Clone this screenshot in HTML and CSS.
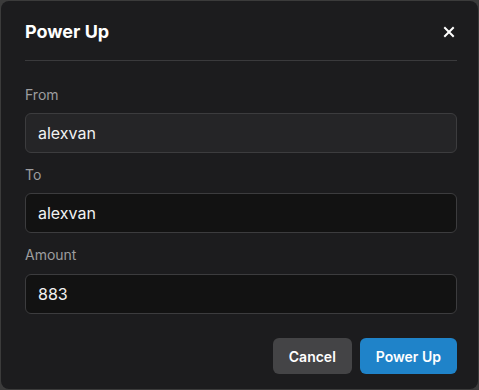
FILE: index.html
```html
<!DOCTYPE html>
<html lang="en">
<head>
    <meta charset="UTF-8">
    <meta name="viewport" content="width=device-width, initial-scale=1.0">
    <title>Power Up</title>
    <link rel="stylesheet" href="styles.css">
</head>
<body>
    <div class="modal">
        <header class="modal-header">
            <h2>Power Up</h2>
            <button type="button" class="close-button" aria-label="Close">
                <svg width="12" height="12" viewBox="0 0 12 12">
                    <path d="M2 2 L10 10 M10 2 L2 10" stroke="#fff" stroke-width="2" stroke-linecap="square"/>
                </svg>
            </button>
        </header>

        <form class="modal-body">
            <label for="from">From</label>
            <input type="text" id="from" class="field readonly" value="alexvan" readonly>

            <label for="to">To</label>
            <input type="text" id="to" class="field" value="alexvan">

            <label for="amount">Amount</label>
            <input type="text" id="amount" class="field" value="883">

            <div class="actions">
                <button type="button" class="btn cancel">Cancel</button>
                <button type="submit" class="btn primary">Power Up</button>
            </div>
        </form>
    </div>
</body>
</html>
```

FILE: styles.css
```css
* {
    margin: 0;
    padding: 0;
    box-sizing: border-box;
    font-family: 'Inter', 'Liberation Sans', Arial, sans-serif;
}

body {
    background-color: #3b3b3b;
    overflow: hidden;
}

.modal {
    width: 477px;
    height: 388px;
    margin: 1px 0 0 1px;
    background-color: #1c1c1e;
    border-radius: 8px;
    padding: 0 21px 0 24px;
}

.modal-header {
    display: flex;
    align-items: center;
    justify-content: space-between;
    height: 60px;
    padding-top: 2px;
    border-bottom: 1px solid #3a3a3c;
}

.modal-header h2 {
    color: #fff;
    font-size: 18px;
    font-weight: 700;
}

.close-button {
    background: none;
    border: none;
    cursor: pointer;
    display: flex;
    margin-right: 2px;
}

.modal-body {
    display: flex;
    flex-direction: column;
    padding-top: 24px;
}

.modal-body label {
    color: #9d9d9f;
    font-size: 14px;
    line-height: 20px;
    margin-bottom: 8px;
}

.field {
    height: 40px;
    width: 100%;
    background-color: #121212;
    border: 1px solid #3c3c3e;
    border-radius: 6px;
    color: #f2f2f2;
    font-size: 16px;
    padding: 0 12px;
    margin-bottom: 12px;
    outline: none;
}

.field.readonly {
    background-color: #252527;
}

.field:last-of-type {
    margin-top: 1px;
}

.actions {
    display: flex;
    justify-content: flex-end;
    gap: 8px;
    margin-top: 12px;
}

.btn {
    height: 36px;
    border: none;
    border-radius: 6px;
    color: #fff;
    font-size: 14px;
    font-weight: 600;
    padding: 0 16px;
    cursor: pointer;
}

.cancel {
    background-color: #444446;
}

.primary {
    background-color: #1f83c9;
}
```
